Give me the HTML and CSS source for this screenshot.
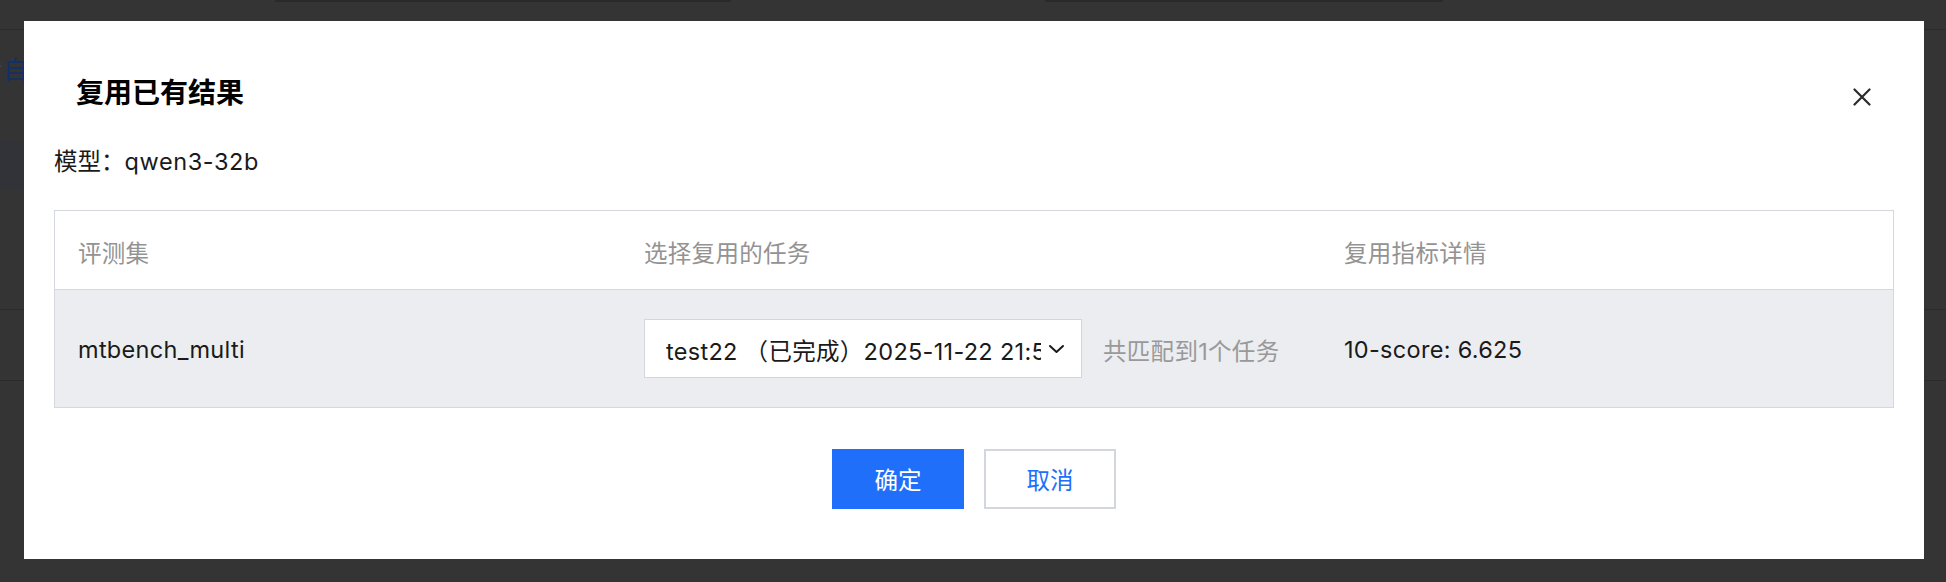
FILE: index.html
```html
<!DOCTYPE html>
<html lang="zh-CN">
<head>
<meta charset="utf-8">
<title>复用已有结果</title>
<link rel="stylesheet" href="styles.css">
</head>
<body>
<div class="page">
  <div class="bg">
    <div class="bg-top">
      <span class="bg-seg bg-seg-a"></span>
      <span class="bg-seg bg-seg-b"></span>
    </div>
    <div class="bg-nav"></div>
    <div class="bg-row bg-row-title"><span class="bg-gray">看</span><span class="bg-link">自定义</span></div>
    <div class="bg-band"></div>
    <div class="bg-row bg-row-a"></div>
    <div class="bg-row bg-row-b"></div>
  </div>

  <div class="dialog" role="dialog">
    <div class="dialog-head">
      <h2 class="dialog-title">复用已有结果</h2>
      <svg class="close" width="18" height="18" viewBox="0 0 18 18" aria-label="关闭">
        <path d="M1.5 1.5 L16.5 16.5 M16.5 1.5 L1.5 16.5" stroke="#2b2b2b" stroke-width="2.2" stroke-linecap="round" fill="none"/>
      </svg>
    </div>
    <div class="model">模型：<span class="model-name">qwen3-32b</span></div>

    <div class="table">
      <div class="tr th">
        <div class="cell">评测集</div>
        <div class="cell">选择复用的任务</div>
        <div class="cell">复用指标详情</div>
      </div>
      <div class="tr td">
        <div class="cell">mtbench_multi</div>
        <div class="cell cell-select">
          <div class="select">
            <span class="select-text">test22 （已完成）2025-11-22 21:58:04</span>
            <svg class="chev" width="17" height="10" viewBox="0 0 17 10"><path d="M2 2 L8.5 8 L15 2" stroke="#1a1a1a" stroke-width="2" fill="none" stroke-linecap="round" stroke-linejoin="round"/></svg>
          </div>
          <span class="match">共匹配到1个任务</span>
        </div>
        <div class="cell">10-score: 6.625</div>
      </div>
    </div>

    <div class="actions">
      <button class="btn btn-primary">确定</button>
      <button class="btn btn-default">取消</button>
    </div>
  </div>
</div>
</body>
</html>
```

FILE: styles.css
```css
* { box-sizing: border-box; }
html, body { margin: 0; padding: 0; }
body {
  width: 1946px;
  height: 582px;
  overflow: hidden;
  background: #343434;
  font-family: Inter, "Noto Sans CJK SC", sans-serif;
}
.page {
  position: relative;
  width: 1946px;
  height: 582px;
}

/* dimmed page behind the modal */
.bg { width: 100%; }
.bg-top { display: flex; height: 2px; }
.bg-seg { display: block; height: 2px; background: #2a2a2a; }
.bg-seg-a { margin-left: 275px; width: 456px; }
.bg-seg-b { margin-left: 314px; width: 398px; }
.bg-nav { height: 28px; border-bottom: 1px solid #2b2b2b; }
.bg-row-title {
  height: 112px;
  padding-top: 24px;
  margin-left: -22px;
  font-size: 25px;
  line-height: 32px;
  white-space: nowrap;
}
.bg-gray { color: #444; }
.bg-link { color: #11306a; }
.bg-band { height: 48px; width: 600px; background: #313338; }
.bg-row-a { height: 120px; border-bottom: 1px solid #2b2b2b; }
.bg-row-b { height: 71px; border-bottom: 1px solid #2b2b2b; }

/* modal */
.dialog {
  position: absolute;
  left: 24px;
  top: 21px;
  width: 1900px;
  height: 538px;
  background: #fff;
  padding: 52px 30px 50px;
  display: flex;
  flex-direction: column;
}
.dialog-head {
  display: flex;
  justify-content: space-between;
  align-items: flex-start;
  height: 40px;
}
.dialog-title {
  margin: 0 0 0 22px;
  font-size: 28px;
  line-height: 40px;
  font-weight: 600;
  color: #000;
}
.close { margin-top: 15px; margin-right: 23px; }

.model {
  margin-top: 33px;
  font-size: 23.5px;
  line-height: 32px;
  color: #1a1a1a;
}
.model-name { letter-spacing: 0.6px; }

.table {
  margin-top: 32px;
  border: 1px solid #d5d8de;
  font-size: 23.5px;
  letter-spacing: 0.3px;
}
.tr {
  display: grid;
  grid-template-columns: 566px 700px 1fr;
  align-items: center;
}
.th { height: 79px; color: #939393; border-bottom: 1px solid #d5d8de; padding-top: 3px; }
.td { height: 117px; background: #ecedf1; color: #1a1a1a; }
.cell { padding: 0 23px; white-space: nowrap; }
.td > .cell { padding-top: 2px; }
.td > .cell-select { padding-top: 0; }
.cell-select { display: flex; align-items: center; gap: 21px; }

.select {
  display: flex;
  align-items: center;
  width: 438px;
  height: 59px;
  background: #fff;
  border: 1px solid #d3d6dd;
  padding: 2px 16px 0 21px;
}
.select-text {
  flex: 1;
  overflow: hidden;
  white-space: nowrap;
  color: #1a1a1a;
}
.chev { flex: none; margin-left: 7px; margin-top: -2px; }
.match { color: #999; padding-top: 2px; }

.actions {
  margin-top: 41px;
  display: flex;
  justify-content: center;
  gap: 20px;
}
.btn {
  width: 132px;
  height: 60px;
  font-family: Inter, "Noto Sans CJK SC", sans-serif;
  font-size: 23.5px;
  border-radius: 0;
  cursor: pointer;
}
.btn-primary { background: #206ffa; color: #fff; border: none; }
.btn-default { background: #fff; color: #206ffa; border: 2px solid #d3d6dd; }
```
